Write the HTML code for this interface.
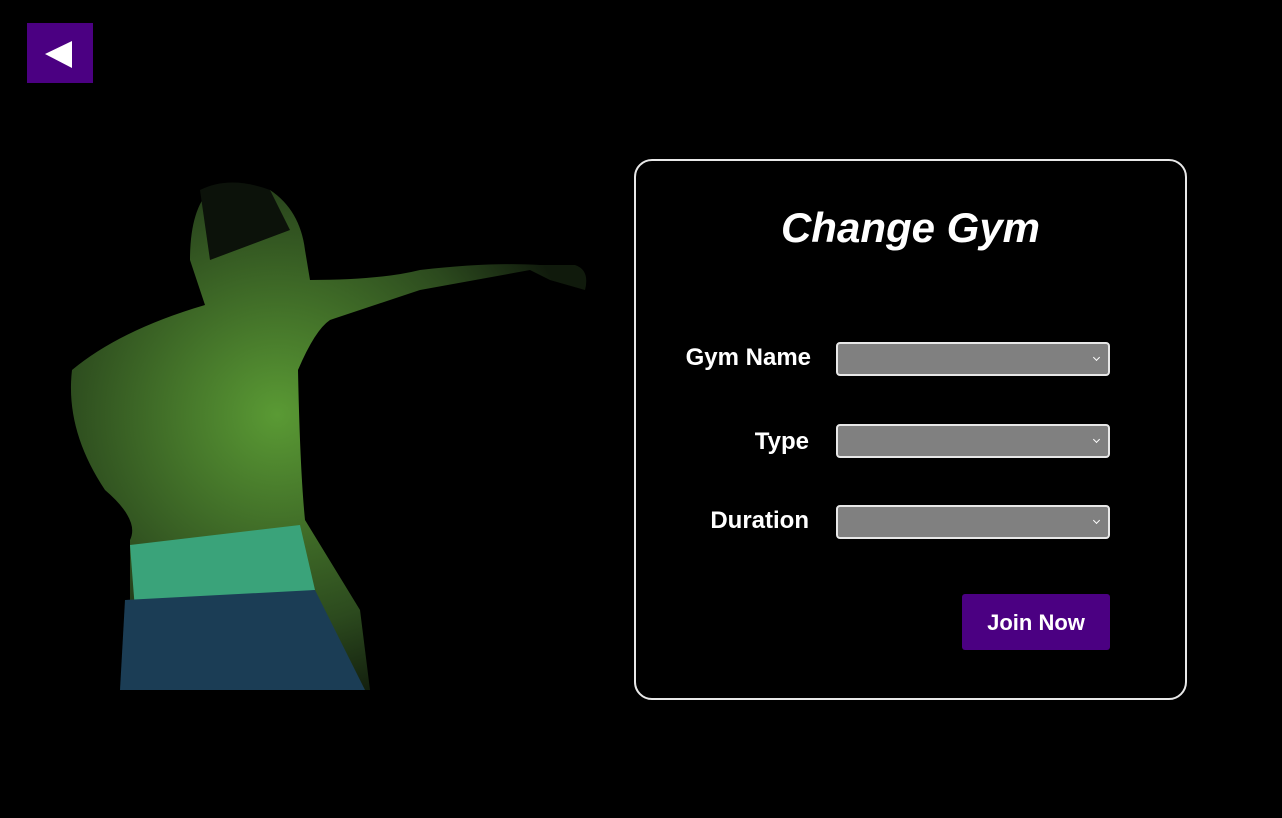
<!DOCTYPE html>
<html><head><meta charset="utf-8"><style>
html,body{margin:0;padding:0;background:#000;width:1282px;height:818px;overflow:hidden;font-family:"Liberation Sans",sans-serif}
.back{position:absolute;left:27px;top:23px;width:66px;height:60px;background:#4b0082}
.card{position:absolute;left:634px;top:159px;width:553px;height:541px;border:2px solid #e8e8e8;border-radius:18px;box-sizing:border-box}
h1{position:absolute;left:634px;width:553px;top:204px;margin:0;text-align:center;color:#fff;font-size:42px;font-style:italic;font-weight:bold}
.lbl{position:absolute;color:#fff;font-weight:bold;font-size:24px;text-align:right;width:200px;left:611px}
.sel{position:absolute;left:836px;width:274px;height:34px;background:#808080;border:2px solid #e8e8e8;border-radius:4px;box-sizing:border-box}
.sel:after{content:"";position:absolute;right:9px;top:11px;width:4px;height:4px;border-right:1.5px solid #fff;border-bottom:1.5px solid #fff;transform:rotate(45deg)}
.btn{position:absolute;left:962px;top:594px;width:148px;height:56px;background:#4b0082;border-radius:3px;color:#fff;font-weight:bold;font-size:22px;text-align:center;line-height:58px}
</style></head><body>
<div class="back"><svg width="66" height="60"><polygon points="18,31 45,18 45,45" fill="#fff"/></svg></div>
<svg style="position:absolute;left:60px;top:170px" width="540" height="530">
<defs><radialGradient id="g" cx="0.4" cy="0.45" r="0.6"><stop offset="0" stop-color="#5a9a34"/><stop offset="0.7" stop-color="#2c4a1e"/><stop offset="1" stop-color="#101a0c"/></radialGradient></defs>
<path d="M150 20 Q130 40 130 90 L145 135 Q60 160 12 200 Q5 260 45 320 Q80 350 70 370 L70 520 L310 520 L300 440 L245 350 Q240 300 238 200 Q255 160 270 150 Q300 140 360 120 L470 100 L490 110 L525 120 Q530 100 515 95 L480 95 Q430 92 360 100 Q320 110 250 110 L245 80 Q240 40 210 20 Z" fill="url(#g)"/>
<path d="M70 375 L240 355 L255 420 L75 440 Z" fill="#3aa37a"/>
<path d="M65 430 L255 420 L305 520 L60 520 Z" fill="#1b3d55"/>
<path d="M140 20 Q170 5 210 20 L230 60 L150 90 Z" fill="#0c120a"/>
</svg>
<div class="card"></div>
<h1>Change Gym</h1>
<div class="lbl" style="top:344px">Gym Name</div>
<div class="lbl" style="top:428px;left:609px">Type</div>
<div class="lbl" style="top:507px;left:609px">Duration</div>
<div class="sel" style="top:342px"></div>
<div class="sel" style="top:424px"></div>
<div class="sel" style="top:505px"></div>
<div class="btn">Join Now</div>
</body></html>
